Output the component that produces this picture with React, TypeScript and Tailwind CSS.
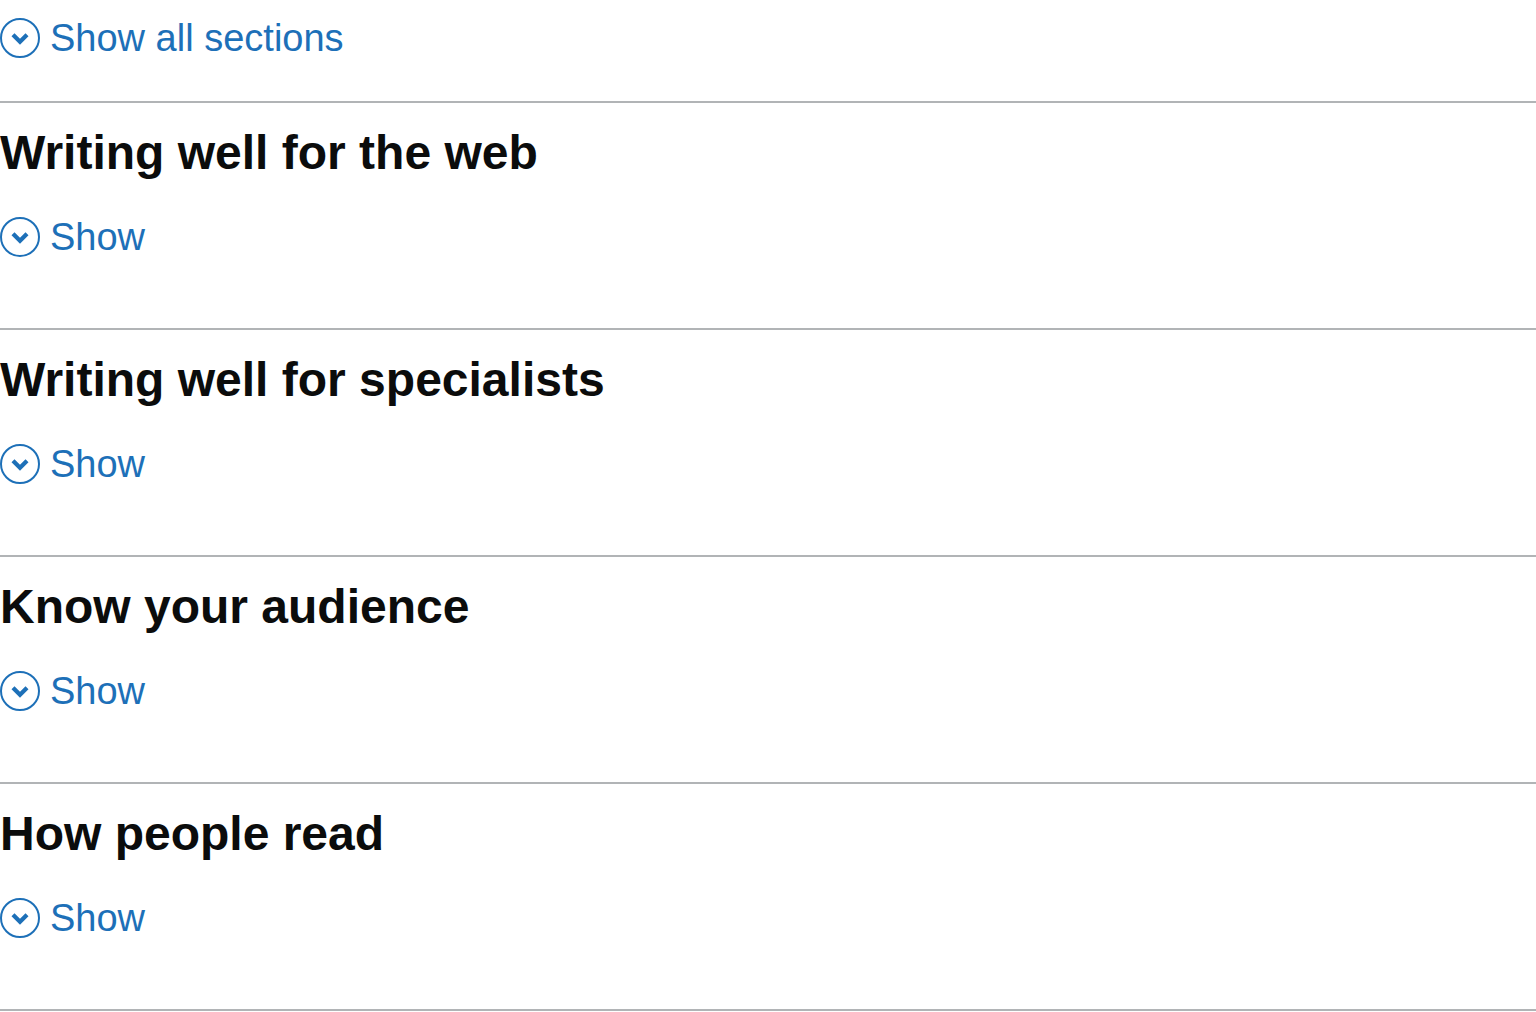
const sections = [
  'Writing well for the web',
  'Writing well for specialists',
  'Know your audience',
  'How people read',
];

function Chevron() {
  return (
    <svg
      className="size-10 shrink-0"
      viewBox="0 0 40 40"
      fill="none"
      stroke="currentColor"
      aria-hidden="true"
    >
      <circle cx="20" cy="20" r="19" strokeWidth="2" />
      <path d="M13 16.7l7 7 7-7" strokeWidth="4.2" />
    </svg>
  );
}

function ToggleButton({ text, label }: { text: string; label?: string }) {
  return (
    <button
      type="button"
      aria-expanded="false"
      aria-label={label}
      className="flex cursor-pointer items-center gap-2.5 text-[38px] leading-10 text-[#1d70b8]"
    >
      <Chevron />
      <span>{text}</span>
    </button>
  );
}

export default function App() {
  return (
    <main className="bg-white pt-[18px] font-['Liberation_Sans',Arial,sans-serif] text-[#0b0c0c]">
      <div className="pb-[43px]">
        <ToggleButton text="Show all sections" />
      </div>
      <div className="border-b-2 border-[#b1b4b6]">
        {sections.map((title) => (
          <section key={title} className="border-t-2 border-[#b1b4b6] pt-5 pb-[71px]">
            <h2 className="mb-[34px] text-5xl leading-[60px] font-bold">{title}</h2>
            <ToggleButton text="Show" label={`Show, ${title}`} />
          </section>
        ))}
      </div>
    </main>
  );
}
